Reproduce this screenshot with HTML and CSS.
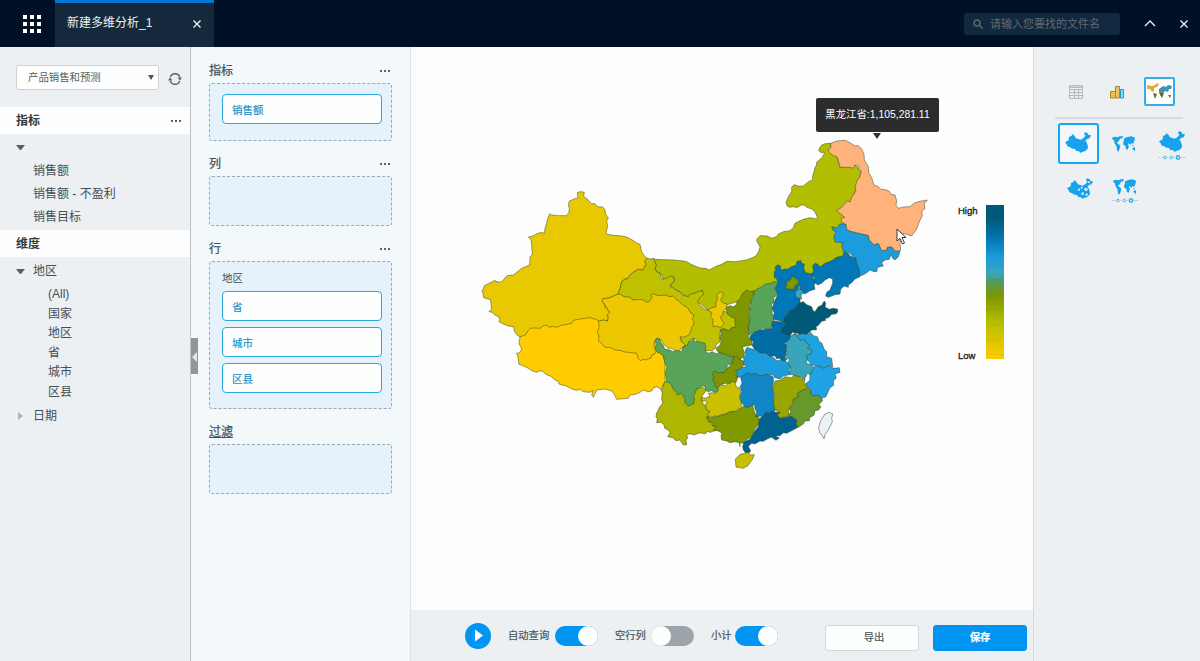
FILE: index.html
```html
<!DOCTYPE html>
<html lang="zh-CN">
<head>
<meta charset="utf-8">
<title>新建多维分析_1</title>
<link rel="stylesheet" href="styles.css">
</head>
<body>
<svg class="defs" width="0" height="0" aria-hidden="true">
  <symbol id="china" viewBox="0 0 78 63">
    <path d="M0 31L11 25L12 15L20 11L22 6L28 11L33 19L47 23L56 18L62 10L57 8L60 0L68 4L70 9L78 9L74 19L66 21L61 27L65 31L68 40L69 49L61 57L51 60L47 63L42 58L34 57L30 51L23 50L15 46L7 43L5 37Z"/>
  </symbol>
  <symbol id="world" viewBox="0 0 72 48">
    <path d="M0 5L9 2L18 4L22 1L34 1L29 8L25 7L22 12L18 18L14 20L19 24L25 29L23 38L19 47L15 44L14 32L8 22L5 11L1 10ZM35 12L37 7L46 3L58 1L69 5L67 16L63 24L58 21L55 27L50 21L48 26L51 30L47 41L42 39L40 29L34 26L33 18L37 15ZM60 27L66 29L65 31L60 29ZM61 36L68 33L70 41L65 47L66 41L61 40Z"/>
  </symbol>
  <symbol id="timeline" viewBox="0 0 78 14">
    <path class="tl-dots" d="M1 7H12M26 7H31M44 7H49M66 7H78"/>
    <circle cx="18" cy="7" r="4"/><circle cx="37" cy="7" r="4"/><circle cx="57" cy="7" r="5" class="tl-on"/>
  </symbol>
</svg>

<header class="topbar">
  <svg class="apps" width="18" height="18" viewBox="0 0 18 18"><path d="M0 0h4v4H0zM7 0h4v4H7zM14 0h4v4h-4zM0 7h4v4H0zM7 7h4v4H7zM14 7h4v4h-4zM0 14h4v4H0zM7 14h4v4H7zM14 14h4v4h-4z"/></svg>
  <div class="tab"><span>新建多维分析_1</span><svg class="cross" width="8" height="8" viewBox="0 0 8 8"><path d="M.5.5l7 7M7.500.5l-7 7"/></svg></div>
  <div class="search"><svg width="10" height="10" viewBox="0 0 10 10"><circle cx="4" cy="4" r="3"/><path d="M6.300 6.300L9.500 9.500"/></svg><span>请输入您要找的文件名</span></div>
  <svg class="chev" width="12" height="7" viewBox="0 0 12 7"><path d="M1 6l5-5 5 5"/></svg>
  <svg class="cross" width="8" height="8" viewBox="0 0 8 8"><path d="M.5.5l7 7M7.500.5l-7 7"/></svg>
</header>

<main class="workspace">
  <aside class="sidebar">
    <div class="source">
      <div class="select"><span>产品销售和预测</span><i></i></div>
      <svg class="refresh" width="14" height="14" viewBox="0 0 14 14"><path d="M2.300 5A5 5 0 0 1 11.700 5M11.700 9A5 5 0 0 1 2.300 9"/><path class="tip" d="M0 8.500H4.500L2 5.500ZM9.500 5.500H14L12 8.500Z"/></svg>
    </div>
    <div class="group-title"><b>指标</b><span class="more"></span></div>
    <div class="measures">
      <div class="leaf parent"><i class="caret"></i></div>
      <div class="leaf">销售额</div>
      <div class="leaf">销售额 - 不盈利</div>
      <div class="leaf">销售目标</div>
    </div>
    <div class="group-title"><b>维度</b></div>
    <div class="dimensions">
      <div class="node"><i class="caret"></i>地区</div>
      <div class="levels"><div>(All)</div><div>国家</div><div>地区</div><div>省</div><div>城市</div><div>区县</div></div>
      <div class="node"><i class="caret shut"></i>日期</div>
    </div>
  </aside>

  <section class="builder">
    <div class="handle"></div>
    <div class="slot-title"><span>指标</span><span class="more"></span></div>
    <div class="slot first"><div class="pill">销售额</div></div>
    <div class="slot-title cols"><span>列</span><span class="more"></span></div>
    <div class="slot"></div>
    <div class="slot-title rows"><span>行</span><span class="more"></span></div>
    <div class="slot tall"><div class="slot-label">地区</div><div class="pill">省</div><div class="pill">城市</div><div class="pill">区县</div></div>
    <div class="slot-title filter"><span>过滤</span></div>
    <div class="slot"></div>
  </section>

  <section class="center">
    <div class="chart">
      <svg class="map" width="480" height="350" viewBox="470 130 480 350">
        <g class="provinces">
          <g transform="translate(475 185) scale(.33333)">
            <path fill="#fc0" d="M135 455L132 475L140 492L134 503L125 505L129 516L132 538L146 543L160 550L172 558L185 562L195 557L205 560L212 568L228 574L240 585L250 589L252 597L260 600L272 602L290 612L305 616L316 613L324 620L345 622L354 616L350 630L355 637L365 615L390 612L410 618L418 628L425 643L460 640L465 630L482 628L495 622L505 615L518 620L530 618L536 608L545 605L558 612L570 590L570 535L560 490L440 400L350 360L180 400Z"/>
            <path fill="#e8c800" d="M308 22L307 32L310 38L298 42L283 48L280 62L283 70L282 82L274 92L250 92L230 90L224 86L219 98L215 115L211 125L208 145L200 142L186 146L174 153L160 156L168 164L170 182L172 208L165 216L164 240L140 250L125 262L115 270L97 272L93 276L80 290L70 292L66 288L64 292L60 286L44 294L28 302L25 312L20 318L24 324L26 338L46 344L48 355L50 372L42 380L52 382L58 389L70 395L74 402L72 410L85 417L100 423L115 425L118 435L120 442L127 451L135 455L152 450L158 438L166 430L176 429L195 430L204 423L213 420L224 427L232 424L245 427L262 420L278 418L290 415L296 406L310 403L330 400L345 398L365 404L372 409L385 405L398 408L400 395L396 391L404 382L398 374L396 368L390 366L390 358L382 350L384 342L405 338L428 328L436 308L440 290L450 282L460 280L464 270L475 262L490 253L503 255L508 248L513 238L509 229L516 220L508 212L500 200L495 178L487 175L472 165L455 156L440 153L415 151L397 148L393 142L398 124L395 108L400 98L392 88L389 72L382 66L368 65L360 56L350 56L342 48L337 42L330 38L326 32L328 22L318 20Z"/>
          </g>
          <g transform="translate(740 130) scale(.33333)">
            <path fill="#b4be00" d="M272 40L255 41L245 45L239 53L236 62L244 68L252 66L252 72L247 82L240 88L230 97L229 107L225 112L222 125L218 138L218 150L205 155L190 168L178 169L162 164L155 172L155 185L145 200L138 218L142 229L150 232L160 230L170 233L184 225L195 226L200 232L218 238L226 248L232 262L230 267L210 263L190 268L172 276L165 280L160 293L150 302L130 305L115 312L109 320L95 325L82 318L60 317L51 326L50 333L60 350L58 360L50 375L40 382L20 390L-15 395L-40 394L-55 403L-70 408L-86 416L-93 420L-102 415L-120 414L-135 408L-150 401L-160 395L-176 392L-200 390L-230 389L-258 388L-252 405L-255 417L-250 425L-236 432L-230 448L-215 447L-200 438L-196 444L-198 455L-204 460L-210 468L-200 472L-195 480L-180 485L-172 493L-160 500L-155 500L-140 490L-112 482L-128 515L-95 540L-42 525L10 510L90 470L200 450L240 420L310 390L310 265L340 200L364 125L345 105L300 110L290 80L270 65Z"/>
          </g>
          <g transform="translate(640 230) scale(.33333)">
            <path fill="#bfc000" d="M42 85L44 95L49 105L45 116L50 125L62 132L63 142L68 148L80 144L92 138L102 143L102 155L95 160L90 170L100 174L108 180L120 185L126 194L145 200L150 192L165 190L176 184L188 182L190 195L182 200L172 215L178 225L195 238L210 242L258 245L280 258L288 268L285 292L275 294L265 302L252 296L243 300L238 310L240 335L228 345L226 355L215 362L195 362L193 353L190 345L175 342L165 325L150 330L146 345L130 350L120 320L-20 210L-67 193L-60 176L-55 155L-45 147L-36 146L-31 137L-20 127L-5 118L8 120L13 113L18 103L14 94L21 85L32 87Z"/>
            <path fill="#edc800" d="M-113 207L-90 203L-67 193L-58 193L-48 200L-30 202L-22 210L-5 209L8 209L20 217L28 214L36 202L33 195L38 191L55 197L75 195L90 200L100 198L108 208L115 212L125 222L145 235L150 247L162 255L157 268L162 275L160 285L155 292L152 305L145 316L130 322L120 320L124 335L135 343L130 352L122 355L118 365L105 362L95 355L85 355L70 342L65 330L56 325L45 330L42 348L50 360L45 372L35 375L33 385L22 387L20 390L10 388L2 392L-5 386L-10 370L-25 368L-45 366L-60 361L-75 360L-90 352L-105 352L-118 338L-125 332L-123 320L-128 305L-122 292L-125 274L-110 270L-97 273L-95 260L-99 256L-91 247L-97 239L-99 233L-105 231L-105 223L-113 215Z"/>
            <path fill="#edc800" d="M243 185L250 190L247 200L242 210L247 218L262 222L258 238L250 243L248 255L242 260L244 270L252 280L248 287L240 293L232 288L220 290L218 278L220 270L212 260L216 248L203 240L210 235L228 230L228 215L233 208L230 196L236 188Z"/>
            <path fill="#7f9800" d="M258 232L270 227L280 230L288 225L293 212L300 206L308 190L320 180L330 185L342 182L338 198L337 215L328 225L332 237L325 245L328 265L330 290L325 305L325 320L335 330L335 345L320 348L308 350L310 360L315 370L305 385L300 390L282 382L260 376L240 370L232 364L228 355L240 345L243 335L240 322L243 310L240 300L250 296L265 302L275 294L288 290L285 275L285 265L272 260L262 252Z"/>
          </g>
          <g transform="translate(640 330) scale(.33333)">
            <path fill="#aeb600" d="M75 155L68 168L70 175L62 179L67 188L65 205L68 220L58 232L54 243L50 248L48 260L52 266L50 278L62 277L72 284L74 295L85 300L90 308L83 320L98 323L108 332L120 330L130 345L140 344L138 330L143 325L140 315L150 311L162 315L180 308L195 312L202 305L212 307L230 300L235 292L223 288L215 285L212 272L200 265L207 255L210 245L198 235L195 225L190 225L185 200L200 180L150 150Z"/>
            <path fill="#7f9400" d="M280 82L288 78L300 90L313 93L320 100L308 108L304 118L290 125L294 140L288 158L275 154L270 160L255 160L240 165L230 178L215 152L222 142L215 135L222 123L235 128L250 126L262 115L275 102Z"/>
            <path fill="#58a45a" d="M50 25L60 28L64 40L70 46L74 57L90 60L100 65L110 61L125 65L128 52L142 45L146 35L155 33L160 25L165 35L180 36L195 40L197 50L195 62L205 70L218 65L228 71L240 68L255 72L265 78L282 82L278 92L275 102L262 105L261 118L250 128L235 128L222 123L215 132L222 142L215 150L225 157L224 167L235 175L232 185L225 188L215 182L205 185L197 181L195 170L185 167L178 175L170 177L165 190L160 198L164 207L160 222L145 228L135 218L134 205L125 190L112 195L107 182L100 178L92 160L80 155L76 130L80 110L75 100L70 78L60 70L52 67L45 58L47 48L52 43L44 34Z"/>
            <path fill="#c8c000" d="M185 202L195 205L210 199L205 190L218 188L225 191L235 182L234 170L245 165L257 167L263 160L272 160L277 153L285 158L289 170L298 174L302 185L299 205L303 215L305 235L290 239L285 245L270 245L255 253L242 254L235 260L225 257L215 262L205 260L203 250L210 245L198 238L197 222L202 216L195 212L183 212Z"/>
            <path fill="#7f9a00" d="M200 260L212 263L225 260L240 257L255 253L270 245L285 245L305 235L310 228L325 228L340 220L339 232L345 250L358 265L355 285L345 296L335 320L322 328L310 340L300 338L300 350L298 338L285 335L270 338L258 332L245 330L243 318L246 310L235 303L220 300L230 290L218 288L217 278L205 275Z"/>
          </g>
          <g transform="translate(735 250) scale(.33333)">
            <path fill="#58a45a" d="M125 95L115 96L105 101L90 102L78 112L64 118L58 126L56 140L48 150L47 170L43 188L45 210L40 230L42 255L58 247L75 240L82 235L98 238L110 232L112 215L120 202L111 188L113 175L109 165L118 156L116 143L129 133L125 122L120 115L130 105Z"/>
            <path fill="#0077b6" d="M118 65L123 59L119 53L128 44L136 48L138 61L150 57L158 58L168 51L184 45L186 34L198 32L199 40L208 42L206 57L212 68L230 72L235 84L245 95L237 105L240 118L225 122L210 132L195 125L195 160L185 165L178 175L160 187L150 200L150 212L135 212L115 208L118 190L112 175L118 156L125 140L129 133L120 115L130 100L125 86L118 82Z"/>
            <path fill="#7f9800" d="M150 115L155 104L153 96L165 90L174 78L182 85L190 90L190 102L180 108L178 117L162 118Z"/>
            <path fill="#38a5bb" d="M190 103L196 107L195 117L205 125L198 137L200 147L190 145L182 140L180 125L188 120Z"/>
            <path fill="#006da5" d="M45 258L58 247L75 240L98 238L112 235L110 222L115 212L133 215L150 212L152 230L140 245L155 250L165 258L180 262L165 275L167 285L155 292L153 306L156 320L150 335L138 330L135 325L125 326L120 317L105 320L90 310L75 309L60 300L51 286L55 275L46 268Z"/>
            <path fill="#005978" d="M190 160L205 155L215 164L230 170L234 182L240 185L250 170L260 166L268 153L272 160L270 172L283 178L295 175L308 178L308 186L302 192L290 193L282 202L270 206L272 211L260 214L250 226L243 230L245 239L230 240L215 255L205 251L195 255L188 250L180 250L172 246L165 258L150 251L140 245L143 235L152 229L150 215L147 205L155 195L162 185L178 175Z"/>
          </g>
          <g transform="translate(720 340) scale(.33333)">
            <path fill="#1b9cdd" d="M46 92L60 88L66 82L80 81L70 72L73 60L68 50L78 45L76 30L82 22L95 27L110 30L120 40L138 38L150 50L162 53L170 62L185 60L205 68L212 82L205 90L212 103L190 108L180 117L165 113L160 105L140 103L120 108L105 100L95 103L80 99L60 112L50 110L54 101Z"/>
            <path fill="#1fa2e2" d="M220 -18L235 -15L250 -20L260 -12L272 -23L280 -13L292 -10L298 5L306 10L312 27L320 35L320 50L335 55L338 80L325 77L310 85L295 78L275 75L240 30Z"/>
            <path fill="#38a5bb" d="M213 -13L225 -18L240 0L255 -1L260 10L270 16L262 25L277 30L272 43L260 45L262 60L258 70L272 73L283 84L270 105L263 100L253 118L240 109L230 113L220 105L207 101L212 82L205 68L210 55L195 60L193 48L202 40L198 30L200 16L190 10L205 2Z"/>
            <path fill="#1fa2e6" d="M283 80L295 78L310 85L325 78L342 85L358 83L360 97L345 102L349 114L340 123L341 136L330 143L323 158L318 170L305 175L295 166L280 167L271 160L273 148L262 142L257 130L269 122L270 105Z"/>
            <path fill="#1286c5" d="M62 112L80 99L95 103L105 100L120 108L140 103L160 110L160 130L157 142L162 155L160 180L165 195L164 215L153 213L148 223L140 214L130 223L124 228L107 230L110 216L104 205L105 193L92 198L80 203L65 190L60 170L65 155L60 140L66 130Z"/>
            <path fill="#99a600" d="M165 123L180 121L195 110L215 113L222 106L240 110L245 117L255 117L252 130L260 136L262 145L250 150L235 158L233 172L220 178L218 190L210 200L205 215L210 228L190 231L175 237L172 225L180 217L165 210L160 190L162 175L165 160L157 150Z"/>
            <path fill="#66982b" d="M265 145L272 150L271 160L280 167L295 166L305 175L308 182L296 194L303 200L296 210L285 212L282 226L270 232L268 242L255 243L250 252L235 262L228 252L230 240L220 232L205 230L212 215L208 205L220 190L220 178L233 172L235 158L250 150Z"/>
            <path fill="#00628f" d="M118 238L130 224L140 214L148 223L153 213L165 217L180 217L172 225L180 235L195 232L215 230L230 240L228 252L234 262L215 272L200 280L190 278L180 287L165 287L178 294L168 301L155 292L145 295L130 304L120 303L105 312L95 310L85 319L92 333L88 338L76 338L70 330L68 320L72 307L90 298L95 290L103 275L115 260Z"/>
            <path fill="#c8c000" d="M60 343L75 340L82 337L93 345L103 344L98 357L92 365L84 377L70 385L48 381L46 358Z"/>
            <path fill="#e9f2f5" d="M328 217L338 222L335 235L337 245L325 270L315 284L312 297L305 284L298 278L296 262L303 240L315 222Z"/>
          </g>
          <g transform="translate(740 130) scale(.33333)">
            <path fill="#0077b6" d="M213 432L221 425L218 408L225 400L234 403L236 410L245 408L255 400L275 392L290 382L310 377L312 365L325 370L330 378L348 384L350 400L358 415L360 440L345 447L335 458L325 465L325 472L312 468L302 478L300 492L285 494L265 502L257 498L260 487L270 480L278 460L278 447L268 443L255 450L245 460L232 465L225 455L224 444Z"/>
            <path fill="#1b9cdd" d="M275 290L290 294L300 282L318 282L320 298L332 304L350 308L362 306L370 313L385 316L388 330L400 335L402 344L415 340L420 347L425 362L440 360L442 352L455 350L465 363L480 365L475 380L465 390L458 385L453 373L448 388L435 390L425 398L430 408L413 412L410 425L402 425L390 420L378 430L362 438L358 420L350 400L348 384L335 376L328 368L312 365L305 350L308 339L285 336L281 320L288 306L278 300Z"/>
            <path fill="#ffb27a" d="M272 40L290 33L315 31L330 38L345 48L355 47L365 57L372 72L373 90L385 110L386 128L395 143L402 165L415 170L423 178L440 180L448 184L453 193L465 195L470 212L468 226L475 235L490 231L510 230L525 218L545 213L562 210L552 222L555 236L545 244L547 257L538 275L530 297L515 318L490 310L480 340L482 362L465 363L455 350L442 352L440 360L425 362L415 340L402 344L388 330L385 316L370 313L350 308L332 304L320 298L318 282L305 277L303 265L314 262L300 250L290 242L305 232L322 213L330 216L336 200L348 183L345 170L352 150L359 142L364 124L355 117L356 108L345 105L340 115L330 112L300 112L295 90L290 80L278 76L268 67L264 60L273 52Z"/>
          </g>
        </g>
      </svg>
      <div class="legend"><div class="legend-labels"><span>High</span><span>Low</span></div><div class="ramp"></div></div>
      <div class="tooltip">黑龙江省:1,105,281.11</div>
      <svg class="cursor" width="11" height="17" viewBox="0 0 11 17"><path d="M1 1V13L4 10.500L6.500 16L8.500 15L6 9.500H10Z"/></svg>
    </div>
    <footer class="actions">
      <svg class="play" width="26" height="26" viewBox="0 0 26 26"><circle cx="13" cy="13" r="13"/><path d="M10 6.500v12l8-6z"/></svg>
      <span class="auto">自动查询</span><i class="switch on"></i>
      <span class="empty">空行列</span><i class="switch"></i>
      <span class="total">小计</span><i class="switch on"></i>
      <button class="export">导出</button><button class="save">保存</button>
    </footer>
  </section>

  <aside class="types">
    <div class="kinds">
      <svg width="15" height="15" viewBox="0 0 15 15" class="grid-icon"><path d="M.5.5h13v13H.5zM.5 4.500h13M.5 7.500h13M.5 10.500h13M5.500 4v9M9.500 4v9"/><path d="M.5.5h13v2H.5z" fill="#d4d8d7"/></svg>
      <svg width="15" height="14" viewBox="0 0 15 14" class="bar-icon"><path fill="#f2c230" d="M.5 6.500h5v6.500h-5z"/><path fill="#e8c36c" d="M5.500 1.500h4V13h-4z"/><path fill="#7edcf5" stroke="#2c9bc0" d="M10.500 4.500h3V13h-3z"/></svg>
      <div class="kind-on"><svg width="25" height="17" viewBox="0 0 25 17"><path fill="#e2a83b" d="M0 2L5 3L8 2L10 0L12 1L10 4L7 5L7 8L5 9L3 6L0 6Z"/><path fill="#3c91bd" d="M12 6L16 3L19 4L21 2L25 3L24 6L22 6L21 9L18 8L16 10L12 9Z"/><path fill="#656b25" d="M6 10L10 11L8 16L7 13ZM12 9L17 10L15 15L13 12ZM21 12L24 12L23 15Z"/></svg></div>
    </div>
    <div class="variants">
      <div class="variant chosen"><svg width="26" height="21"><use href="#china"/></svg></div>
      <div class="variant"><svg width="24" height="16"><use href="#world"/></svg></div>
      <div class="variant timed"><svg width="26" height="21"><use href="#china"/></svg><svg class="tl" width="26" height="5"><use href="#timeline"/></svg></div>
      <div class="variant plain"><svg width="26" height="21" viewBox="0 0 78 63"><use href="#china"/><g class="holes"><circle cx="36" cy="35" r="3.500"/><circle cx="47" cy="47" r="4"/><circle cx="57" cy="34" r="5"/><circle cx="44" cy="29" r="3"/><circle cx="66" cy="13" r="3"/><circle cx="59" cy="50" r="3.500"/></g></svg></div>
      <div class="variant timed"><svg width="24" height="16"><use href="#world"/></svg><svg class="tl" width="26" height="5"><use href="#timeline"/></svg></div>
    </div>
  </aside>
</main>
</body>
</html>
```

FILE: styles.css
```css
* { box-sizing: border-box; }
body { margin: 0; width: 1200px; height: 661px; overflow: hidden; display: flex; flex-direction: column; font: 12px/18px "Liberation Sans", "Noto Sans CJK SC", sans-serif; color: #444f54; background: #ecf0f3; }
svg { display: block; flex: none; }
i { display: block; flex: none; }
.defs { position: absolute; }

/* top bar */
.topbar { height: 47px; flex: none; background: #001126; display: flex; align-items: center; padding-right: 12px; }
.apps { margin: 1px 14px 0 23px; fill: #fff; }
.tab { width: 159px; height: 47px; background: #15293d; border-top: 3px solid #0078d2; display: flex; align-items: center; justify-content: space-between; padding: 0 13px 4px 12px; color: #eef3f6; }
.tab .cross { margin-top: 1px; }
.cross { fill: none; stroke: #eef2f5; stroke-width: 1.4; }
.search { margin-left: auto; width: 156px; height: 22px; border-radius: 3px; background: #11293f; display: flex; align-items: center; padding-left: 9px; gap: 7px; color: #626a70; font-size: 11px; }
.search svg { fill: none; stroke: #5f6669; stroke-width: 1.5; }
.chev { margin: 0 24px; fill: none; stroke: #eef2f5; stroke-width: 1.4; }

.workspace { flex: 1; display: flex; min-height: 0; }

/* field list */
.sidebar { width: 191px; flex: none; border-right: 1px solid #b9c2c7; background: #ecf0f3; }
.source { height: 60px; padding: 18px 8px 0 16px; display: flex; justify-content: space-between; }
.select { width: 143px; height: 25px; border: 1px solid #ced2d5; border-radius: 3px; background: #fdfefd; display: flex; align-items: center; justify-content: space-between; padding: 0 4px 0 11px; font-size: 10.400px; color: #555f61; }
.select i { border: 3px solid transparent; border-top: 5px solid #4b5859; border-bottom: 0; }
.refresh { margin-top: 7px; fill: none; stroke: #56615f; stroke-width: 1.4; }
.refresh .tip { fill: #56615f; stroke: none; }
.group-title { height: 27px; background: #fdfefd; display: flex; align-items: center; justify-content: space-between; padding: 0 9px 0 16px; color: #333b3e; }
.more { width: 10px; height: 2px; background: repeating-linear-gradient(90deg, #5b6467 0 2px, transparent 2px 4px); }
.measures { height: 96px; padding-top: 3px; }
.leaf { height: 23px; line-height: 23px; padding-left: 33px; }
.leaf.parent { padding: 8px 0 0 16px; }
.caret { border: 4.500px solid transparent; border-top: 5px solid #56625f; border-bottom: 0; width: 9px; height: 5px; }
.caret.shut { border: 4px solid transparent; border-left: 5px solid #a9b4b9; border-right: 0; width: 5px; height: 8px; margin: 0 2px; }
.dimensions { padding-top: 1px; }
.node { display: flex; align-items: center; gap: 8px; height: 26px; padding-left: 16px; }
.levels { padding: 1px 0 1px 48px; line-height: 19.500px; }

/* query builder */
.builder { width: 220px; flex: none; position: relative; padding: 15px 18px 0 18px; background: #f3f8fb; border-right: 1px solid #dde2e5; }
.handle { position: absolute; left: 0; top: 291px; width: 7px; height: 36px; background: #919699; }
.handle::after { content: ""; position: absolute; left: 1px; top: 14px; border: 5px solid transparent; border-right: 5px solid #e3e7e9; border-left: 0; }
.slot-title { height: 21px; display: flex; align-items: center; justify-content: space-between; padding: 0 2px 4px 0; color: #43545a; -webkit-text-stroke: .25px; }
.slot-title.cols { margin-top: 14px; }
.slot-title.rows { margin-top: 14px; }
.slot-title.filter { margin-top: 14px; text-decoration: underline; }
.slot { width: 183px; height: 50px; border: 1px dashed #9aa9b3; border-radius: 3px; background: #e5f2fc; padding: 10px 9px 0 12px; }
.slot.first { height: 58px; }
.slot.tall { height: 148px; padding-top: 7px; }
.slot-label { font-size: 10.500px; line-height: 18px; margin-bottom: 4px; }
.pill { width: 160px; height: 30px; border: 1px solid #28a9da; border-radius: 4px; background: #fdfefe; line-height: 30px; padding-left: 9px; font-size: 10.500px; color: #108fc4; margin-bottom: 6px; -webkit-text-stroke: .15px; }

/* chart */
.center { width: 622px; flex: none; display: flex; flex-direction: column; }
.chart { height: 563px; position: relative; background: #fdfdfd; display: flex; align-items: flex-start; }
.map { margin: 83px 0 0 59px; }
.provinces path { stroke: #304020; stroke-opacity: .6; stroke-width: 2.400; stroke-linejoin: round; }
.legend { display: flex; gap: 9px; margin: 158px 0 0 8px; height: 154px; color: #16191a; font: 9.500px/12px "Liberation Sans", sans-serif; -webkit-text-stroke: .3px; }
.legend-labels { width: 19px; height: 157px; display: flex; flex-direction: column; justify-content: space-between; }
.ramp { width: 18px; background: repeating-linear-gradient(180deg, transparent 0 14px, rgba(0,40,60,.06) 14px 15px), linear-gradient(180deg, #005978 0 8%, #0073aa 20%, #1b9cdd 34%, #38a5bb 44%, #589a52 51%, #7f9800 59%, #b4be00 76%, #f2c900 95%, #fc0); }
.tooltip { position: absolute; left: 405px; top: 51px; width: 123px; height: 34px; line-height: 34px; text-align: center; border-radius: 2px; background: #2c2c2d; color: #fff; font-size: 10.400px; }
.tooltip::after { content: ""; position: absolute; left: 57px; top: 35px; border: 4px solid transparent; border-top: 6px solid #253538; border-bottom: 0; }
.cursor { position: absolute; left: 485px; top: 181px; fill: #fff; stroke: #30383c; }

/* action bar */
.actions { flex: 1; display: flex; align-items: center; padding: 1px 6px 0 54px; background: #ecf0f3; font-size: 10.300px; color: #46565b; white-space: nowrap; -webkit-text-stroke: .2px; }
.play { margin-top: -1px; fill: #0195f2; }
.play path { fill: #fff; }
.auto { margin: 0 5px 0 17px; width: 42px; }
.empty { margin: 0 5px 0 17px; width: 31px; }
.total { margin: 0 3px 0 17px; width: 21px; }
.switch { width: 43px; height: 20px; border-radius: 10px; background: #9da5ab; display: flex; }
.switch::before { content: ""; width: 20px; height: 20px; border-radius: 50%; background: #fdfefe; }
.switch.on { background: #0195f2; justify-content: flex-end; }
button { width: 94px; height: 26px; padding: 0; font: inherit; border: 1px solid #d0d6da; border-radius: 3px; background: #fdfefe; color: #46565b; }
.export { margin: 3px 14px 0 auto; padding-left: 4px; }
.save { margin-top: 3px; background: #0195f2; border-color: #0195f2; color: #fff; font-weight: 700; }

/* chart type picker */
.types { flex: 1; border-left: 1px solid #d5dade; background: #ecf0f3; padding: 30px 16px 0 21px; }
.kinds { width: 128px; height: 42px; display: flex; align-items: flex-start; border-bottom: 2px solid #d7dadd; padding-left: 14px; }
.grid-icon { margin: 8px 26px 0 0; fill: none; stroke: #b5bab8; }
.bar-icon { margin: 8px 19px 0 0; stroke: #a18438; }
.kind-on { flex: none; width: 31px; height: 29px; border: 2px solid #35aee8; border-radius: 2px; background: #fdfefd; display: grid; place-items: center; }
.variants { display: grid; grid-template-columns: 41px 41px 41px; column-gap: 6px; row-gap: 4px; margin: 4px 0 0 3px; fill: #16a2ef; }
.variant { height: 41px; display: flex; flex-direction: column; align-items: center; justify-content: center; gap: 3px; padding: 3px 4px 2px 0; }
.variant.chosen { border: 2px solid #16a6f0; border-radius: 3px; background: #f3f7fa; padding: 0 2px 3px 0; }
.variant.plain { padding: 0 0 1px 2px; }
.variant.timed { padding: 6px 2px 2px 0; }
.tl { fill: none; stroke: #3aaade; stroke-width: 2.500; }
.tl-dots { stroke-dasharray: 2 3; }
.tl-on { stroke-width: 4.500; }
.holes { fill: #d9eef9; }
```
